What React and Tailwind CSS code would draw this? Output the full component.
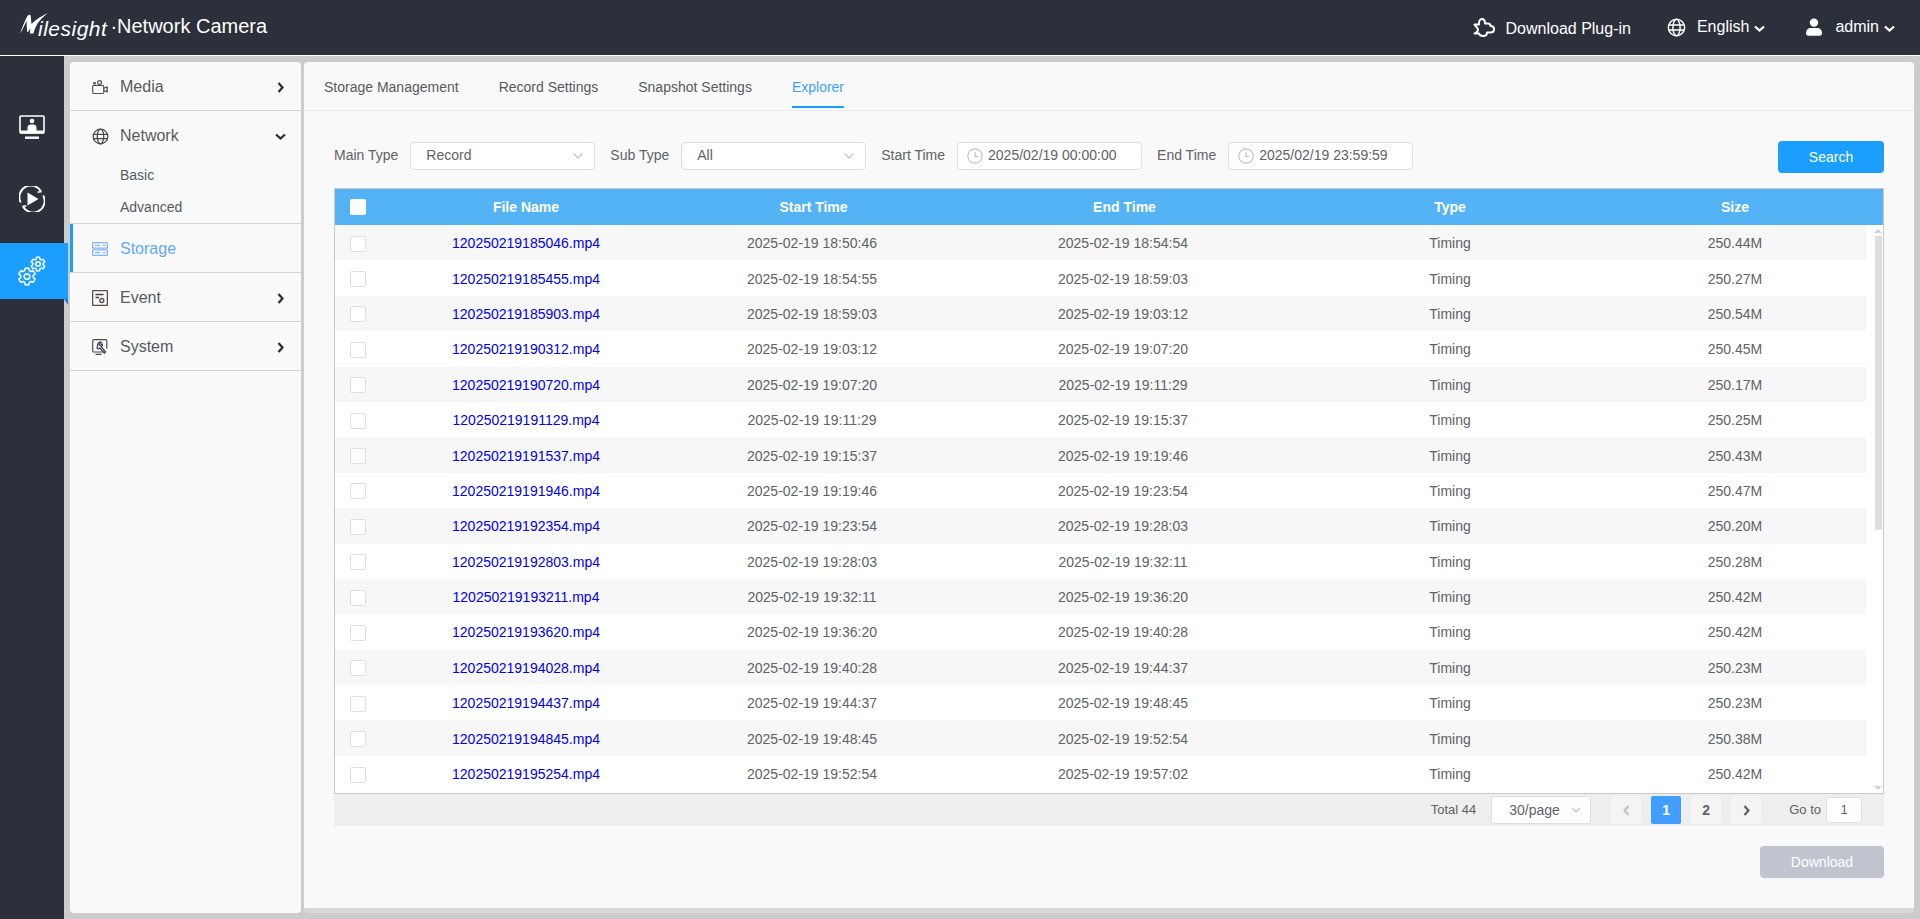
import React from "react";
import { ChevronDown } from "lucide-react";

const ROWS = [
  ["120250219185046.mp4", "2025-02-19 18:50:46", "2025-02-19 18:54:54", "250.44M"],
  ["120250219185455.mp4", "2025-02-19 18:54:55", "2025-02-19 18:59:03", "250.27M"],
  ["120250219185903.mp4", "2025-02-19 18:59:03", "2025-02-19 19:03:12", "250.54M"],
  ["120250219190312.mp4", "2025-02-19 19:03:12", "2025-02-19 19:07:20", "250.45M"],
  ["120250219190720.mp4", "2025-02-19 19:07:20", "2025-02-19 19:11:29", "250.17M"],
  ["120250219191129.mp4", "2025-02-19 19:11:29", "2025-02-19 19:15:37", "250.25M"],
  ["120250219191537.mp4", "2025-02-19 19:15:37", "2025-02-19 19:19:46", "250.43M"],
  ["120250219191946.mp4", "2025-02-19 19:19:46", "2025-02-19 19:23:54", "250.47M"],
  ["120250219192354.mp4", "2025-02-19 19:23:54", "2025-02-19 19:28:03", "250.20M"],
  ["120250219192803.mp4", "2025-02-19 19:28:03", "2025-02-19 19:32:11", "250.28M"],
  ["120250219193211.mp4", "2025-02-19 19:32:11", "2025-02-19 19:36:20", "250.42M"],
  ["120250219193620.mp4", "2025-02-19 19:36:20", "2025-02-19 19:40:28", "250.42M"],
  ["120250219194028.mp4", "2025-02-19 19:40:28", "2025-02-19 19:44:37", "250.23M"],
  ["120250219194437.mp4", "2025-02-19 19:44:37", "2025-02-19 19:48:45", "250.23M"],
  ["120250219194845.mp4", "2025-02-19 19:48:45", "2025-02-19 19:52:54", "250.38M"],
  ["120250219195254.mp4", "2025-02-19 19:52:54", "2025-02-19 19:57:02", "250.42M"],
];

const COLS = "grid grid-cols-[65px_252px_320px_302px_352px_218px] items-center text-center";

/* ===== Icons ===== */
function BoldChevron({ dir = "right", className }) {
  const d = dir === "right" ? "M1.5 1l4 4.500-4 4.500" : dir === "left" ? "M5.500 1l-4 4.500 4 4.500" : "M1 1.500l4.500 4 4.500-4";
  const size = dir === "down" ? "w-[11px] h-[7px]" : "w-[7px] h-[11px]";
  const box = dir === "down" ? "0 0 11 7" : "0 0 7 11";
  return (
    <svg viewBox={box} fill="none" stroke="currentColor" strokeWidth="2.300" className={`${size} ${className || ""}`}>
      <path d={d} />
    </svg>
  );
}

function GlobeIcon({ className }) {
  return (
    <svg viewBox="0 0 20 20" fill="none" stroke="currentColor" strokeWidth="1.500" className={className}>
      <circle cx="10" cy="10" r="8.600" />
      <ellipse cx="10" cy="10" rx="3.800" ry="8.600" />
      <path d="M1.600 7.400h16.800M1.600 12.600h16.800" />
    </svg>
  );
}

function PluginIcon() {
  return (
    <svg viewBox="0 0 22 19" fill="none" stroke="currentColor" strokeWidth="2" strokeLinejoin="round" className="w-[22px] h-[19px]">
      <path d="M1.500 6.500H6C5.500 3.500 7 1 9 1s3 2 3 4.500h3c1.500 0 2.500 1 2.500 2.500 2 0 3.500 1 3.500 3s-1.500 3.500-3.500 3.500h-3.500c0 2-1.500 3.500-4 3.500-2.200 0-3.500-1-4-2.500H1.500c1.500-1 3.500-1.500 3.500-3.500 0-2.500-2-3-3.500-5.500z" />
    </svg>
  );
}

function UserIcon() {
  return (
    <svg viewBox="0 0 18 18" fill="currentColor" className="w-[18px] h-[18px]">
      <circle cx="9" cy="4.600" r="4.200" />
      <path d="M1 15c0-3 2-5 4.500-5h7c2.500 0 4.500 2 4.500 5 0 1.800-1 2.700-2.500 2.700h-11C2 17.700 1 16.800 1 15z" />
    </svg>
  );
}

function MonitorIcon() {
  return (
    <svg viewBox="0 0 26 26" fill="none" className="w-[26px] h-[26px]">
      <rect x="1" y="1" width="24" height="17" rx="1" stroke="white" strokeWidth="1.600" />
      <rect x="1" y="15.500" width="24" height="3" fill="white" />
      <circle cx="13" cy="6" r="2.300" fill="white" />
      <path d="M8.500 16v-3.500c0-2 1.500-3 3-3h3c1.500 0 3 1 3 3V16z" fill="white" />
      <rect x="6" y="21.500" width="14" height="2.400" fill="white" />
    </svg>
  );
}

function PlaybackIcon() {
  return (
    <svg viewBox="0 0 26 26" fill="none" stroke="white" strokeWidth="1.800" className="w-[26px] h-[26px]">
      <path d="M1.800 16.500A11.500 11.500 0 0 1 22 5.500" />
      <path d="M24.200 9.500A11.500 11.500 0 0 1 4 20.500" />
      <path d="M20 2.500l2 3.200-3.400.6M6 23.500l-2-3.200 3.400-.6" strokeWidth="1.400" />
      <path d="M8.500 6.500l11 6.500-11 6.500z" fill="white" stroke="none" />
    </svg>
  );
}

// gear outline, six rounded teeth
function gearPath(cx, cy, r) {
  const inner = r * 0.74;
  const pts = [];
  for (let i = 0; i < 6; i++) {
    const a = (i * Math.PI) / 3 - Math.PI / 2;
    const w = 0.3;
    pts.push([a - w * 1.3, inner], [a - w * 0.7, r], [a + w * 0.7, r], [a + w * 1.3, inner]);
  }
  const d = pts
    .map(([a, rad], i) => `${i === 0 ? "M" : "L"}${(cx + rad * Math.cos(a)).toFixed(2)} ${(cy + rad * Math.sin(a)).toFixed(2)}`)
    .join(" ");
  return `${d} Z`;
}

function GearsIcon() {
  return (
    <svg viewBox="0 0 28 30" fill="none" stroke="white" strokeWidth="1.500" strokeLinejoin="round" className="w-[28px] h-[30px]">
      <path d={gearPath(20, 8, 7)} />
      <circle cx="20" cy="8" r="2.300" />
      <path d={gearPath(9, 20.500, 8.500)} />
      <circle cx="9" cy="20.500" r="2.800" />
    </svg>
  );
}

function MediaIcon() {
  return (
    <svg viewBox="0 0 18 16" fill="none" strokeWidth="1.300" className="w-[18px] h-[16px]">
      <rect x="0.800" y="6.300" width="12.400" height="9" rx="1" stroke="#5b4a3e" />
      <path d="M13.200 9.500l3.800-1.500v5.500l-3.800-1.500" stroke="#334155" />
      <circle cx="8.500" cy="3" r="2.200" stroke="#5b4a3e" />
      <circle cx="2.800" cy="3.800" r="1.100" stroke="#5b4a3e" />
    </svg>
  );
}

function StorageIcon() {
  return (
    <svg viewBox="0 0 16 14" fill="none" stroke="#80b4ff" strokeWidth="1.300" className="w-[16px] h-[14px]">
      <rect x="0.600" y="0.600" width="14.800" height="5.600" rx="1" />
      <rect x="0.600" y="7.800" width="14.800" height="5.600" rx="1" />
      <path d="M3 3.400h5M3 10.600h5M11 3.400h2.500M11 10.600h2.500" />
    </svg>
  );
}

function EventIcon() {
  return (
    <svg viewBox="0 0 16 16" fill="none" strokeWidth="1.300" className="w-[16px] h-[16px]">
      <rect x="0.600" y="0.600" width="14.800" height="14.800" rx="1" stroke="#5b4a3e" />
      <path d="M3.500 4.500h8M3.500 7.500h3.500" stroke="#334155" />
      <circle cx="9.800" cy="10.500" r="2" stroke="#5b4a3e" />
    </svg>
  );
}

function SystemIcon() {
  return (
    <svg viewBox="0 0 16 16" fill="none" strokeWidth="1.200" className="w-[16px] h-[16px]">
      <path d="M12 13H2a1.300 1.300 0 0 1-1.300-1.300V1.800A1.300 1.300 0 0 1 2 .6h11.500a1.300 1.300 0 0 1 1.300 1.200v8" stroke="#5b4a3e" />
      <path d="M3.500 15.300h6" stroke="#334155" />
      <path d="M9.500 3.200a3 3 0 0 0-3.800 3.900l-.6.900a1.300 1.300 0 0 0 1.800 1.700l1-.6 4.500 5 1.300-1.100-4.300-5a3 3 0 0 0 .9-3l-1.900 1.600-1.300-1.400z" stroke="#334155" />
    </svg>
  );
}

function ClockIcon() {
  return (
    <svg viewBox="0 0 16 16" fill="none" stroke="#c0c4cc" strokeWidth="1.200" className="w-[16px] h-[16px] shrink-0">
      <circle cx="8" cy="8" r="7.200" />
      <path d="M8 3.800V8.500h3.500" />
    </svg>
  );
}

/* ===== Header ===== */
function TopBar() {
  return (
    <header className="h-[56px] shrink-0 bg-[#2b303a] border-b border-white flex items-center text-white pl-[20px] pr-[25px]">
      <div className="flex items-center mt-[-4px]">
        <svg viewBox="0 0 30 22" className="w-[30px] h-[22px] mr-[-12px] mt-[-4px]" fill="white">
          <path d="M0 20.500C2.500 14 5 7 7.500 3c1.500-2 3-1.500 3.300.5L11.500 11C16 6.500 22 2.500 28 0c-6 4.500-12 10-14.500 20.500H10l.3-5-2 3.300H7L6.500 8C4.500 12 2.500 17 0 20.500z" />
        </svg>
        <span className="italic text-[21px] leading-none tracking-[0.5px] mt-[5px]">ilesight</span>
        <span className="text-[20px] leading-none ml-[3px]">·Network Camera</span>
      </div>

      <div className="ml-auto flex items-center text-[16px]">
        <PluginIcon />
        <span className="ml-[11px] mt-[3px]">Download Plug-in</span>
        <GlobeIcon className="w-[19px] h-[19px] ml-[36px]" />
        <span className="ml-[11px] mt-[-2px]">English</span>
        <BoldChevron dir="down" className="ml-[5px] mt-[2px]" />
        <div className="ml-[40px] mt-[-2px]"><UserIcon /></div>
        <span className="ml-[12px] mt-[-2px]">admin</span>
        <BoldChevron dir="down" className="ml-[5px] mt-[2px]" />
      </div>
    </header>
  );
}

/* ===== Left rail ===== */
function Rail() {
  return (
    <nav className="w-[64px] shrink-0 bg-[#2b303a] flex flex-col relative z-10">
      <div className="h-[71px] mt-[36px] flex items-center justify-center"><MonitorIcon /></div>
      <div className="h-[71px] flex items-center justify-center"><PlaybackIcon /></div>
      <div className="relative w-[68px] h-[56px] mt-[9px] bg-[#1a9fff] flex items-center pl-[18px]">
        <GearsIcon />
        <span className="absolute left-[64px] top-[56px] w-0 h-0 border-t-[6px] border-t-[#1a7fd0] border-l-[4px] border-l-transparent" />
      </div>
    </nav>
  );
}

/* ===== Menu ===== */
function MenuRow({ icon, label, active }) {
  return (
    <div
      className={`h-[49px] pt-[2px] border-b border-[#d2d2d2] flex items-center relative pl-[22px] pr-[17px] text-[16px] ${
        active ? "text-[#5fa9ff]" : "text-[#555a62]"
      }`}
    >
      {active && <span className="absolute left-0 top-0 bottom-0 w-[3px] bg-[#1a9fff]" />}
      <span className="w-[16px] flex justify-center">{icon}</span>
      <span className="ml-[12px]">{label}</span>
      {!active && <BoldChevron className="ml-auto text-[#2b303a]" />}
    </div>
  );
}

function SideMenu() {
  return (
    <aside className="w-[231px] shrink-0 ml-[6px] my-[6px] bg-[#fafafa] rounded-[4px]">
      <MenuRow icon={<MediaIcon />} label="Media" />
      <div className="border-b border-[#d2d2d2]">
        <div className="h-[48px] pt-[2px] flex items-center pl-[22px] pr-[15px] text-[16px] text-[#555a62]">
          <span className="w-[16px] flex justify-center"><GlobeIcon className="w-[17px] h-[17px] shrink-0 text-[#4a4a4a]" /></span>
          <span className="ml-[12px]">Network</span>
          <BoldChevron dir="down" className="ml-auto text-[#2b303a]" />
        </div>
        <div className="h-[32px] flex items-center pl-[50px] text-[14px] text-[#555a62]">Basic</div>
        <div className="h-[32px] flex items-center pl-[50px] text-[14px] text-[#555a62]">Advanced</div>
      </div>
      <MenuRow icon={<StorageIcon />} label="Storage" active />
      <MenuRow icon={<EventIcon />} label="Event" />
      <MenuRow icon={<SystemIcon />} label="System" />
    </aside>
  );
}

/* ===== Filters ===== */
function SelectBox({ value }) {
  return (
    <div className="w-[185px] h-[28px] ml-[12px] bg-white border border-[#dcdfe6] rounded-[4px] flex items-center pl-[15px] pr-[8px] text-[#606266]">
      <span>{value}</span>
      <ChevronDown size={16} className="ml-auto text-[#c0c4cc]" />
    </div>
  );
}

function DateBox({ value }) {
  return (
    <div className="w-[185px] h-[28px] ml-[12px] bg-white border border-[#dcdfe6] rounded-[4px] flex items-center pl-[9px] text-[#606266]">
      <ClockIcon />
      <span className="ml-[5px]">{value}</span>
    </div>
  );
}

function Filters() {
  return (
    <div className="flex items-center h-[32px] pb-[3px] text-[14px] text-[#606266]">
      <span>Main Type</span>
      <SelectBox value="Record" />
      <span className="ml-[15px]">Sub Type</span>
      <SelectBox value="All" />
      <span className="ml-[15px]">Start Time</span>
      <DateBox value="2025/02/19 00:00:00" />
      <span className="ml-[15px]">End Time</span>
      <DateBox value="2025/02/19 23:59:59" />
      <button className="ml-auto self-start w-[106px] h-[32px] rounded-[4px] bg-[#1a9fff] text-white">Search</button>
    </div>
  );
}

/* ===== Table ===== */
function FileTable() {
  return (
    <div className="h-[606px] border border-[#c8c9cc] bg-white text-[14px] text-[#606266] flex flex-col">
      <div className={`${COLS} h-[36px] shrink-0 bg-[#53b3f5] text-white font-bold`}>
        <div className="flex justify-start pl-[15px]">
          <span className="w-[16px] h-[16px] bg-white rounded-[2px]" />
        </div>
        <div>File Name</div>
        <div className="pl-[3px]">Start Time</div>
        <div className="pl-[3px]">End Time</div>
        <div>Type</div>
        <div>Size</div>
      </div>
      <div className="flex-1 flex overflow-hidden">
        <div className="w-[1531px] shrink-0">
          {ROWS.map((r, idx) => (
            <div key={r[0]} className={`${COLS} h-[35.4px] pt-[2px] ${idx % 2 === 0 ? "bg-[#f7f7f7]" : "bg-white"}`}>
              <div className="flex justify-start pl-[15px]">
                <span className="w-[16px] h-[16px] bg-white border border-[#dcdfe6] rounded-[2px]" />
              </div>
              <div className="text-[#0000ee]">{r[0]}</div>
              <div>{r[1]}</div>
              <div>{r[2]}</div>
              <div>Timing</div>
              <div>{r[3]}</div>
            </div>
          ))}
        </div>
        <div className="flex-1 pl-[8px] pr-[2px] flex flex-col items-center">
          <span className="mt-[4px] w-0 h-0 border-x-[4px] border-x-transparent border-b-[4px] border-b-[#d0d0d0]" />
          <span className="mt-[3px] w-[7px] h-[294px] bg-[#dedede]" />
          <span className="mt-auto mb-[3px] w-0 h-0 border-x-[4px] border-x-transparent border-t-[4px] border-t-[#d0d0d0]" />
        </div>
      </div>
    </div>
  );
}

function PageButton({ children, active, muted }) {
  return (
    <span
      className={`w-[30px] h-[28px] rounded-[2px] flex items-center justify-center font-bold text-[14px] ${
        active ? "bg-[#409eff] text-white" : muted ? "bg-[#f4f4f5] text-[#c0c4cc]" : "bg-[#f4f4f5] text-[#606266]"
      }`}
    >
      {children}
    </span>
  );
}

function Pager() {
  return (
    <div className="h-[32px] bg-[#eeeeee] flex items-center justify-end pr-[22px] text-[13px] text-[#606266]">
      <span>Total 44</span>
      <div className="w-[100px] h-[28px] ml-[15px] bg-white border border-[#dcdfe6] rounded-[3px] flex items-center pl-[17px] pr-[7px] text-[14px]">
        <span>30/page</span>
        <ChevronDown size={14} className="ml-auto text-[#c0c4cc]" />
      </div>
      <div className="ml-[20px] flex gap-[10px]">
        <PageButton muted><BoldChevron dir="left" /></PageButton>
        <PageButton active>1</PageButton>
        <PageButton>2</PageButton>
        <PageButton><BoldChevron /></PageButton>
      </div>
      <span className="ml-[28px]">Go to</span>
      <div className="w-[36px] h-[26px] ml-[5px] bg-white border border-[#dcdfe6] rounded-[3px] flex items-center justify-center text-[13px]">1</div>
    </div>
  );
}

/* ===== Main panel ===== */
function MainPanel() {
  const tabs = ["Storage Management", "Record Settings", "Snapshot Settings", "Explorer"];
  return (
    <main className="flex-1 min-w-0 ml-[3px] mr-[6px] my-[6px] bg-[#f9f9f9] rounded-[4px] border-b-[5px] border-[#d8d8d8]">
      <div className="flex gap-10 pl-[20px] pt-[15px] pb-[2px] border-b border-[#e8eaee] text-[14px] text-[#555a62]">
        {tabs.map((t) => (
          <div
            key={t}
            className={`pb-[9px] border-b-2 leading-[20px] ${
              t === "Explorer" ? "border-[#1a9fff] text-[#3fa2f7]" : "border-transparent"
            }`}
          >
            {t}
          </div>
        ))}
      </div>
      <div className="px-[30px] pt-[30px]">
        <Filters />
        <div className="mt-[15px]"><FileTable /></div>
        <Pager />
        <div className="mt-[20px] flex justify-end">
          <button className="w-[124px] h-[32px] rounded-[4px] bg-[#c0c4cf] text-white text-[14px]">Download</button>
        </div>
      </div>
    </main>
  );
}

export default function App() {
  return (
    <div className="h-screen flex flex-col bg-[#cccccc] overflow-hidden font-['Liberation_Sans',sans-serif]">
      <TopBar />
      <div className="flex-1 flex min-h-0">
        <Rail />
        <SideMenu />
        <MainPanel />
      </div>
    </div>
  );
}
